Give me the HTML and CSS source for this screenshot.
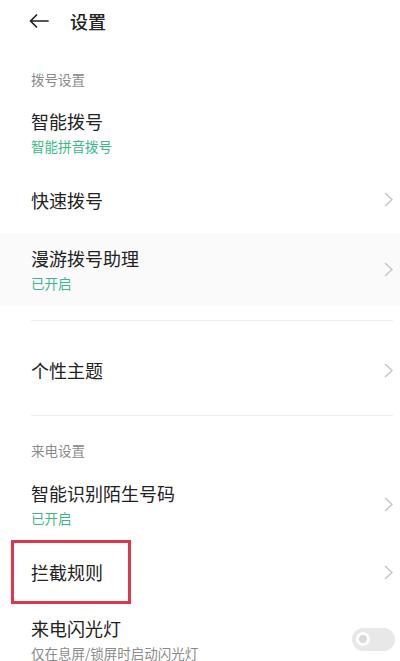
FILE: index.html
```html
<!DOCTYPE html>
<html lang="zh-CN">
<head>
  <meta charset="UTF-8">
  <meta name="viewport" content="width=device-width, initial-scale=1.0">
  <title>设置</title>
  <link rel="stylesheet" href="styles.css">
</head>
<body>
  <header class="topbar">
    <svg class="back" width="20" height="14" viewBox="0 0 20 14">
      <path d="M19 7H1.5M7.5 1L1.5 7l6 6" fill="none" stroke="#222" stroke-width="1.7" stroke-linecap="round" stroke-linejoin="round"/>
    </svg>
    <h1>设置</h1>
  </header>
  <main>
    <div class="group-label">拨号设置</div>

    <div class="item item-smart">
      <div class="text">
        <div class="title">智能拨号</div>
        <div class="sub">智能拼音拨号</div>
      </div>
    </div>

    <div class="item item-quick">
      <div class="text">
        <div class="title">快速拨号</div>
      </div>
      <svg class="chevron" width="9" height="15" viewBox="0 0 9 15"><path d="M1 1l7 6.5L1 14" fill="none" stroke="#c4c4c4" stroke-width="1.4"/></svg>
    </div>

    <div class="item item-roam">
      <div class="text">
        <div class="title">漫游拨号助理</div>
        <div class="sub">已开启</div>
      </div>
      <svg class="chevron" width="9" height="15" viewBox="0 0 9 15"><path d="M1 1l7 6.5L1 14" fill="none" stroke="#c4c4c4" stroke-width="1.4"/></svg>
    </div>

    <div class="divider first"></div>

    <div class="item item-theme">
      <div class="text">
        <div class="title">个性主题</div>
      </div>
      <svg class="chevron" width="9" height="15" viewBox="0 0 9 15"><path d="M1 1l7 6.5L1 14" fill="none" stroke="#c4c4c4" stroke-width="1.4"/></svg>
    </div>

    <div class="divider"></div>

    <div class="group-label second">来电设置</div>

    <div class="item item-identify">
      <div class="text">
        <div class="title">智能识别陌生号码</div>
        <div class="sub">已开启</div>
      </div>
      <svg class="chevron" width="9" height="15" viewBox="0 0 9 15"><path d="M1 1l7 6.5L1 14" fill="none" stroke="#c4c4c4" stroke-width="1.4"/></svg>
    </div>

    <div class="item item-block">
      <div class="text">
        <div class="title">拦截规则</div>
      </div>
      <svg class="chevron" width="9" height="15" viewBox="0 0 9 15"><path d="M1 1l7 6.5L1 14" fill="none" stroke="#c4c4c4" stroke-width="1.4"/></svg>
      <div class="highlight"></div>
    </div>

    <div class="item item-flash">
      <div class="text">
        <div class="title">来电闪光灯</div>
        <div class="sub muted">仅在息屏/锁屏时启动闪光灯</div>
      </div>
      <div class="toggle"><span class="knob"></span></div>
    </div>
  </main>
</body>
</html>
```

FILE: styles.css
```css
body {
  margin: 0;
  background: #fff;
  color: #222;
  font-family: "Noto Sans CJK SC", "Noto Sans", sans-serif;
}
.topbar {
  height: 42px;
  display: flex;
  align-items: center;
  padding-left: 29px;
}
.back {
  margin-right: 21px;
}
.topbar h1 {
  margin: 0;
  font-size: 18px;
  font-weight: 500;
  line-height: 24px;
}
.group-label {
  padding: 27px 31px 9px;
  font-size: 13.5px;
  line-height: 20px;
  color: #8a8a8a;
}
.group-label.second {
  padding-top: 24px;
}
.item {
  position: relative;
  display: flex;
  align-items: center;
  justify-content: space-between;
  padding: 0 7px 0 31px;
}
.title {
  font-size: 18px;
  line-height: 24px;
}
.sub {
  margin-top: 3px;
  font-size: 13.5px;
  line-height: 20px;
  color: #3bb888;
}
.sub.muted {
  color: #8a8a8a;
}
.item-smart { height: 68px; }
.item-quick { height: 67px; }
.item-roam {
  height: 73px;
  background: #fafafa;
}
.item-theme {
  height: 94px;
  box-sizing: border-box;
  padding-top: 4px;
}
.item-identify { height: 71px; }
.item-block { height: 64px; }
.item-flash { height: 70px; }
.divider {
  height: 1px;
  margin: 0 7px 0 31px;
  background: #ededed;
}
.divider.first {
  margin-top: 14px;
}
.highlight {
  position: absolute;
  left: 11px;
  top: 0;
  width: 120px;
  height: 64px;
  box-sizing: border-box;
  border: 3px solid #e0354d;
}
.toggle {
  width: 43px;
  height: 23px;
  margin-right: -2px;
  border-radius: 12px;
  background: #e8e8e8;
  display: flex;
  align-items: center;
  padding-left: 4px;
  box-sizing: border-box;
}
.knob {
  width: 14px;
  height: 14px;
  box-sizing: border-box;
  border-radius: 50%;
  border: 3px solid #fff;
  background: #dadada;
}
```
